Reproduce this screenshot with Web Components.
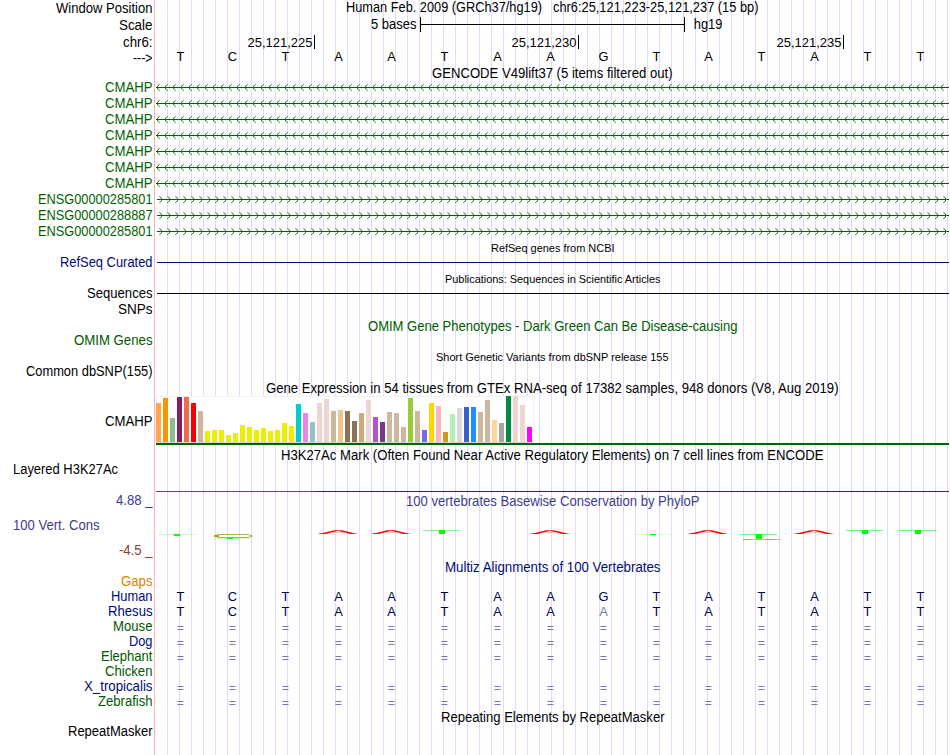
<!DOCTYPE html>
<html lang="en"><head><meta charset="utf-8"><title>Genome browser</title>
<style>html,body{margin:0;background:#fff}body{width:950px;height:755px;overflow:hidden}</style></head>
<body><genome-browser></genome-browser>
<script>
const INK='#000',GREEN='#006400',NAVY='#000c78',DK='#000050',CONS='#3c3c8c',RED='#8c3c3c';

/* Text condensed or widened to occupy a given width. */
class FitText extends HTMLElement{
  connectedCallback(){
    this.attachShadow({mode:'open'}).innerHTML='<style>:host{display:inline-block;white-space:pre;transform-origin:0 50%}</style><span><slot></slot></span>';
    const w=+this.getAttribute('w');
    if(!w)return;
    const n=this.getBoundingClientRect().width;
    this.style.transform=`scaleX(${w/n})`;
    this.style.marginRight=(w-n)+'px';
  }
}
customElements.define('fit-text',FitText);

/* One row: label column, separator, data column. */
class TrackRow extends HTMLElement{
  connectedCallback(){
    const h=this.getAttribute('h'),b=this.getAttribute('b')||12;
    this.attachShadow({mode:'open'}).innerHTML=`<style>
    :host{display:grid;grid-template-columns:155px 794px;height:${h}px;line-height:15px}
    .l{display:flex;justify-content:flex-end;padding-right:2.6px;margin-top:${b-12}px;height:15px}
    :host([left]) .l{justify-content:flex-start;padding-left:12.7px}
    .d{min-width:0;height:${h}px}</style>
    <div class="l"><slot name="label"></slot></div><div class="d"><slot></slot></div>`;
  }
}
customElements.define('track-row',TrackRow);

class TrackTitle extends HTMLElement{
  connectedCallback(){
    this.attachShadow({mode:'open'}).innerHTML=`<style>:host{display:flex;justify-content:center;margin-top:${this.getAttribute('b')-12}px;padding-left:.6px;height:15px}
    :host([small]){font-size:11px}</style><slot></slot>`;
  }
}
customElements.define('track-title',TrackTitle);

/* Fifteen equally spaced bases. */
class BaseRow extends HTMLElement{
  connectedCallback(){
    const o=this.getAttribute('b')-12,dim=this.getAttribute('dim');
    this.attachShadow({mode:'open'}).innerHTML=`<style>:host{display:grid;grid-template-columns:repeat(15,52.9px);margin:${o}px 0 0 -1.5px;height:15px;font-size:13.5px;text-align:center}span{transform:scaleX(.95)}.x{color:#7878b4}.e{font-size:13px;color:#7878b4}</style>`+
    [...this.getAttribute('seq')].map((c,i)=>`<span class="${c==='='?'e':dim===String(i)?'x':''}">${c}</span>`).join('');
  }
}
customElements.define('base-row',BaseRow);

/* Line drawings; x coordinates start at the data column's left edge, 155. */
class TrackPlot extends HTMLElement{
  connectedCallback(){
    const h=+this.getAttribute('h'),k=this.getAttribute('kind');
    this.attachShadow({mode:'open'}).innerHTML=`<style>:host{display:block;height:${h}px}svg{display:block;font:${k==='ticks'?13.5:14}px "Liberation Sans",Arial,sans-serif}</style>
    <svg width="794" height="${h}" viewBox="155 0 794 ${h}">${this[k](h)}</svg>`;
  }
  rect(x,y,w,h,f,e=''){return `<rect x="${x}" y="${y}" width="${w}" height="${h}" fill="${f}" ${e}/>`}
  scale(){
    return this.rect(420,1,1,15,INK)+this.rect(684,1,1,15,INK)+this.rect(420,8,265,1,INK)+
    `<text x="371" y="13" textLength="45.5" lengthAdjust="spacingAndGlyphs">5 bases</text><text x="693.8" y="13" textLength="28.5" lengthAdjust="spacingAndGlyphs">hg19</text>`;
  }
  ticks(){
    return [[314,225],[578,230],[843,235]].map(([x,n])=>this.rect(x,1,1,14,INK)+`<text x="${x-66.5}" y="12.6" textLength="65" lengthAdjust="spacingAndGlyphs">25,121,${n}</text>`).join('');
  }
  left(){return this.arrows(1)}
  right(){return this.arrows(-1)}
  arrows(s){
    let o=this.rect(157,7,792,1,GREEN);
    for(let a=s>0?156:162;a<949;a+=8){
      for(const [dx,dy,p] of [[0,0,1],[1,1,.9],[2,2,.75],[1,2,.2],[2,3,.2],[3,3,.55]])
        for(const y of dy?[7-dy,7+dy]:[7])o+=this.rect(a+s*dx,y,1,1,GREEN,`opacity="${p}"`);
    }
    return o;
  }
  curated(){return this.rect(157,7,792,1,'#000c78')}
  seqs(){return this.rect(157,7,792,1,INK)}
  bars(){
    const top=[69,54,114,51,51,69,93,153,150,150,165,159,135,141,150,144,153,150,129,138,72,99,126,69,57,93,90,93,123,99,60,111,126,96,99,141,54,93,150,69,78,156,102,84,81,81,96,60,120,129,48,48,75,141];
    const T='CDB79E',P='EED5D2';
    const c=['FFA54F','EE9A00','8FBC8F','8B1C62','EE6A50','FF0000',T,...Array(13).fill('EEEE00'),'00CDCD','EE82EE','9AC0CD',P,P,T,'EEC591','8B7355','8B7355','CDAA7D',P,'B452CD','7A378B',T,T,T,'9ACD32',T,'7A67EE','FFD700','FFB6C1','CD9B1D','B4EEB4','D9D9D9','3A5FCD','1E90FF',T,T,'FFD39B','A6A6A6','008B45',P,P,'FF00FF'];
    return this.rect(156,0,378,47,'#f2f2f2')+this.rect(157,1,376,45,'#fff')+this.rect(156,46,378,1,'#d4d4d4')+
    top.map((t,i)=>this.rect(156+7*i,t/3-16,5,62-t/3,'#'+c[i])).join('')+this.rect(156,47,793,2,GREEN);
  }
  mark(){return this.rect(156,28,160,1,'#7c3c68')+this.rect(315,28,634,1,'#601464')}
  cons(){
    let o='';
    for(const x of [338,391,550,708,814])
      o+=`<path d="M${x-20} 40.5L${x-15} 40L${x-4} 37.3H${x+4}L${x+15} 40L${x+20} 40.5L${x+15} 41H${x+12}L${x+5} 39L${x} 38L${x-5} 39L${x-12} 41H${x-18}Z" fill="#f00"/>`+this.rect(x-6,39,12,1,'#f00','opacity=".25"');
    for(const [x,y,h,a] of [[177,41,2,.25],[442,37,4,.5],[653,41,1,.15],[759,41,5,.55],[865,37,4,.55],[918,37,4,.55]])
      o+=this.rect(x-19,y,37,1,'#0f0',`opacity="${a}"`)+this.rect(x-3,y,6,h,'#0f0');
    o+=this.rect(227,45,6,1,'#0f0')+this.rect(212,45,38,1,'#0f0','opacity=".18"')+
    '<path d="M214 43L219 41.5H248L252.5 43L248 44.5H219Z" fill="none" stroke="#aaaa32" stroke-width=".9"/>'+this.rect(214,42,5,2,'#aaaa00')+
    this.rect(743,46,38,1,'#c8c878')+this.rect(743,46,7,1,'#aaaa50')+this.rect(765,46,10,1,'#aaaa50');
    return o;
  }
}
customElements.define('track-plot',TrackPlot);

/* Left block of the conservation track: range limits and the track name. */
class ConsLabels extends HTMLElement{
  connectedCallback(){
    this.attachShadow({mode:'open'}).innerHTML=`<style>:host{display:grid;grid-template-rows:25px 25px 15px;width:139.8px;justify-items:start}
    .r{justify-self:end}.n{color:${CONS}}.m{color:${RED}}</style>
    <fit-text class="r n" w="36.5">4.88 _</fit-text><fit-text class="n" w="86.5">100 Vert. Cons</fit-text><fit-text class="r m" w="33.5">-4.5 _</fit-text>`;
  }
}
customElements.define('cons-labels',ConsLabels);

class GenomeBrowser extends HTMLElement{
  connectedCallback(){
    const row=(h,b,t,w,c,body='',a='')=>`<track-row h="${h}" b="${b}" ${a}>${t?`<fit-text slot="label" w="${w-.5}" style="color:${c}">${t}</fit-text>`:''}${body}</track-row>`;
    const title=(h,b,t,w,c=INK,s='')=>`<track-row h="${h}"><track-title b="${b}" ${s}><fit-text w="${w-.5}" style="color:${c}">${t}</fit-text></track-title></track-row>`;
    const plot=(k,h)=>`<track-plot kind="${k}" h="${h}"></track-plot>`;
    const seq=(s,b,c=INK,dim='')=>`<base-row seq="${s}" b="${b}" dim="${dim}" style="color:${c}"></base-row>`;
    const S='TCTAATAAGTATATT',E='='.repeat(15),G='#005a00';
    let o=row(16,13,'Window Position',97,INK,'<track-title b="12.4"><fit-text w="196">Human Feb. 2009 (GRCh37/hg19)</fit-text><fit-text style="margin-left:11.5px" w="205.5">chr6:25,121,223-25,121,237 (15 bp)</fit-text></track-title>')
    +row(18,14,'Scale',34,INK,plot('scale',18))
    +row(16,13,'chr6:',30,INK,plot('ticks',16))
    +row(16,13,'---&gt;',20,INK,seq(S,11.4))
    +title(14,12,'GENCODE V49lift37 (5 items filtered out)',241);
    for(let i=0;i<7;i++)o+=row(16,12,'CMAHP',48,GREEN,plot('left',16));
    for(const n of [285801,288887,285801])o+=row(16,12,'ENSG00000'+n,115,GREEN,plot('right',16));
    o+=title(15,13,'RefSeq genes from NCBI',124,INK,'small')
    +row(16,12,'RefSeq Curated',93,NAVY,plot('curated',16))
    +title(15,13,'Publications: Sequences in Scientific Articles',216,INK,'small')
    +row(15,12,'Sequences',66,INK,plot('seqs',15))
    +row(17,13,'SNPs',35,INK)
    +title(15,13,'OMIM Gene Phenotypes - Dark Green Can Be Disease-causing',370,G)
    +row(16,12,'OMIM Genes',79,G)
    +title(15,13,'Short Genetic Variants from dbSNP release 155',233,INK,'small')
    +row(16,12,'Common dbSNP(155)',127,INK)
    +title(16,13,'Gene Expression in 54 tissues from GTEx RNA-seq of 17382 samples, 948 donors (V8, Aug 2019)',573)
    +row(51,30,'CMAHP',48,INK,plot('bars',51))
    +title(16,13,'H3K27Ac Mark (Often Found Near Active Regulatory Elements) on 7 cell lines from ENCODE',543)
    +row(30,11,'Layered H3K27Ac',105.5,INK,plot('mark',30),'left')
    +`<track-row h="67" b="12"><cons-labels slot="label"></cons-labels><track-title b="13"><fit-text w="293.5" style="color:${CONS}">100 vertebrates Basewise Conservation by PhyloP</fit-text></track-title><track-plot class="under" kind="cons" h="51"></track-plot></track-row>`
    +title(14,12,'Multiz Alignments of 100 Vertebrates',216,NAVY)
    +row(15,12,'Gaps',32,'#dc8200')
    +row(15,12,'Human',42,NAVY,seq(S,12,DK))
    +row(15,12,'Rhesus',45,NAVY,seq('TCTAATAAATATATT',12,DK,8));
    for(const [n,w,c] of [['Mouse',40,G],['Dog',24,NAVY],['Elephant',52,G],['Chicken',48,G],['X_tropicalis',69,NAVY],['Zebrafish',55,G]])
      o+=row(15,12,n,w,c,n==='Chicken'?'':seq(E,13,DK));
    o+=title(16,13,'Repeating Elements by RepeatMasker',224)+row(30,11,'RepeatMasker',85,INK);
    this.attachShadow({mode:'open'}).innerHTML=`<style>
    :host{display:block;width:949px;height:755px;font:14px "Liberation Sans",Arial,sans-serif;color:#000;
    background:linear-gradient(#ffb4b4,#ffb4b4) 154px 0/1px 100% no-repeat,
    repeating-linear-gradient(90deg,#dcdcff 0 1px,transparent 1px 12px) 167px 0/782px 100% no-repeat}
    .under{margin-top:-16px}</style>`+o;
  }
}
customElements.define('genome-browser',GenomeBrowser);
</script></body></html>
